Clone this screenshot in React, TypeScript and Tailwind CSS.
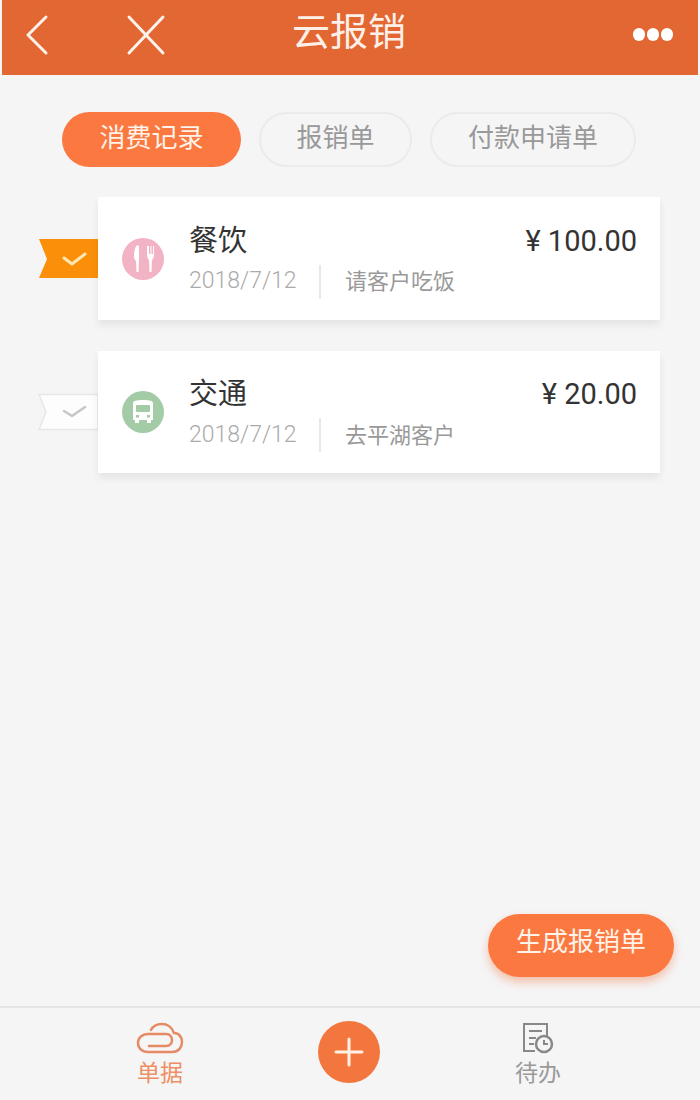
import React from 'react';

const font = "font-['Roboto','Noto_Sans_CJK_SC',sans-serif]";

function Ribbon({ active }: { active: boolean }) {
  return (
    <svg width="60" height="40" viewBox="0 0 60 40" className="shrink-0">
      {active ? (
        <>
          <path d="M1 0H60V39H1L9 20Z" fill="#fb8f0a" />
          <path d="M26 19l8 6 13-10" fill="none" stroke="#fde7b0" strokeWidth="3" strokeLinecap="round" strokeLinejoin="round" />
        </>
      ) : (
        <>
          <path d="M1 2.500H60V37.500H1L8 20Z" fill="#fdfdfd" stroke="#e6e6e6" strokeWidth="1.500" />
          <path d="M26 19l8 5 13-9" fill="none" stroke="#c6c6c6" strokeWidth="2.500" strokeLinecap="round" strokeLinejoin="round" />
        </>
      )}
    </svg>
  );
}

function ForkIcon() {
  return (
    <svg width="42" height="42" viewBox="0 0 42 42">
      <circle cx="21" cy="21" r="21" fill="#f2b3c4" />
      <path d="M15 7c-2 2-3 7-3 11 0 3 1 4 2 5l.5 11h2l.5-11V8Z" fill="#fff" />
      <path d="M25 8v8c0 3 .8 5 2 6l.5 12h2l.5-12c1.200-1 2-3 2-6V8h-1v8h-1.500V8h-1v8H27V8Z" fill="#fff" />
    </svg>
  );
}

function BusIcon() {
  return (
    <svg width="42" height="42" viewBox="0 0 42 42">
      <circle cx="21" cy="21" r="21" fill="#a3cba5" />
      <path d="M11 12c0-2 3-3 10-3s10 1 10 3v17h-2v3h-4v-3h-8v3h-4v-3h-2Z" fill="#fff" />
      <rect x="14" y="14" width="14" height="7" rx="1" fill="#a3cba5" />
      <rect x="14" y="24" width="3" height="2.500" fill="#a3cba5" />
      <rect x="25" y="24" width="3" height="2.500" fill="#a3cba5" />
    </svg>
  );
}

function Card({ icon, title, amount, date, note, active }: {
  icon: React.ReactNode;
  title: string;
  amount: string;
  date: string;
  note: string;
  active: boolean;
}) {
  return (
    <div className="flex items-center pl-[38px]">
      <Ribbon active={active} />
      <div className={`w-[562px] ${active ? 'h-[123px]' : 'h-[122px]'} bg-white shadow-[0_5px_8px_rgba(0,0,0,0.07)] flex items-center pl-[24px] pr-[23px]`}>
        <div className="w-[42px] h-[42px] shrink-0">{icon}</div>
        <div className="ml-[25px] flex-1 pt-[5px]">
          <div className="flex justify-between items-center h-[36px]">
            <span className="text-[29px] text-[#333]">{title}</span>
            <span className="text-[29px] text-[#333]">{amount}</span>
          </div>
          <div className="flex items-center mt-[5px] h-[34px] text-[23px] text-[#aaa]">
            <span className="w-[130px] font-light">{date}</span>
            <span className="w-[2px] h-[34px] bg-[#e8e8e8] mr-[24px]"></span>
            <span className="text-[22px] text-[#999]">{note}</span>
          </div>
        </div>
      </div>
    </div>
  );
}

export default function App() {
  return (
    <div className={`w-[700px] h-[1100px] bg-[#f5f5f6] flex flex-col ${font}`}>
      {/* top bar */}
      <div className="mx-[2px] h-[75px] bg-[#e36733] flex items-center shrink-0">
        <svg width="30" height="44" viewBox="0 0 30 44" className="ml-[20px] mb-[6px]">
          <path d="M24 4L6 22l18 18" fill="none" stroke="#fdf3ec" strokeWidth="3" strokeLinecap="round" strokeLinejoin="round" />
        </svg>
        <svg width="42" height="42" viewBox="0 0 42 42" className="ml-[73px] mb-[6px]">
          <path d="M4 3l34 36M38 3L4 39" fill="none" stroke="#fdf3ec" strokeWidth="3" strokeLinecap="round" />
        </svg>
        <span className="ml-[125px] mb-[10px] text-[38px] text-[#fdf0e8]">云报销</span>
        <div className="ml-auto mr-[25px] mb-[6px] flex gap-[2px]">
          <span className="w-[12px] h-[13px] rounded-full bg-white"></span>
          <span className="w-[12px] h-[13px] rounded-full bg-white"></span>
          <span className="w-[12px] h-[13px] rounded-full bg-white"></span>
        </div>
      </div>

      {/* tabs */}
      <div className="flex gap-[18px] pl-[62px] mt-[37px] shrink-0">
        <div className="w-[179px] h-[55px] rounded-full bg-[#fb7941] text-[#fff3ea] text-[26px] flex items-center justify-center pb-[3px]">消费记录</div>
        <div className="w-[153px] h-[55px] rounded-full border-2 border-[#ebebeb] text-[#999] text-[26px] flex items-center justify-center pb-[3px]">报销单</div>
        <div className="w-[206px] h-[55px] rounded-full border-2 border-[#ebebeb] text-[#999] text-[26px] flex items-center justify-center pb-[3px]">付款申请单</div>
      </div>

      {/* list */}
      <div className="flex flex-col gap-[31px] mt-[30px] shrink-0">
        <Card icon={<ForkIcon />} title="餐饮" amount="¥ 100.00" date="2018/7/12" note="请客户吃饭" active />
        <Card icon={<BusIcon />} title="交通" amount="¥ 20.00" date="2018/7/12" note="去平湖客户" active={false} />
      </div>

      <div className="flex-1 flex items-end justify-end pr-[26px] pb-[29px]">
        <div className="w-[186px] h-[63px] rounded-full bg-[#fb7941] shadow-[0_5px_10px_rgba(240,110,50,0.4)] text-[#fff3ea] text-[26px] flex items-center justify-center pb-[6px]">生成报销单</div>
      </div>

      {/* bottom nav */}
      <div className="h-[94px] border-t-2 border-[#e4e4e4] grid grid-cols-[320px_58px_1fr] shrink-0">
        <div className="flex flex-col items-center pt-[14px]">
          <svg width="48" height="32" viewBox="0 0 48 32">
            <path
              d="M12 30H36C43 30 46 25 46 20C46 15 43 11 38 11C36 5 31 2 26 2C21 2 17 4 15 8M12 30C6 30 2 26 2 21C2 16 6 12 12 12H30C34 12 36 15 36 18C36 21 34 24 30 24H13"
              fill="none"
              stroke="#e58a63"
              strokeWidth="2.500"
              strokeLinecap="round"
            />
          </svg>
          <span className="text-[23px] leading-[28px] mt-[6px] text-[#ee8f63]">单据</span>
        </div>
        <div className="flex items-start pt-[13px] justify-center">
          <div className="w-[62px] h-[62px] shrink-0 rounded-full bg-[#f4763f] flex items-center justify-center">
            <svg width="30" height="30" viewBox="0 0 30 30">
              <path d="M15 2v26M2 15h26" stroke="#fdf1e6" strokeWidth="3" strokeLinecap="round" />
            </svg>
          </div>
        </div>
        <div className="flex flex-col items-center pt-[14px] pr-[2px]">
          <svg width="34" height="32" viewBox="0 0 34 32">
            <path d="M26 14V2H3V29H14" fill="none" stroke="#888" strokeWidth="2" />
            <path d="M8 9h13M8 16h7M8 22h5" stroke="#888" strokeWidth="2" />
            <circle cx="23" cy="22" r="8" fill="none" stroke="#888" strokeWidth="2.500" />
            <path d="M23 18v4h4" fill="none" stroke="#888" strokeWidth="2" />
          </svg>
          <span className="text-[23px] leading-[28px] mt-[6px] text-[#999]">待办</span>
        </div>
      </div>
    </div>
  );
}
